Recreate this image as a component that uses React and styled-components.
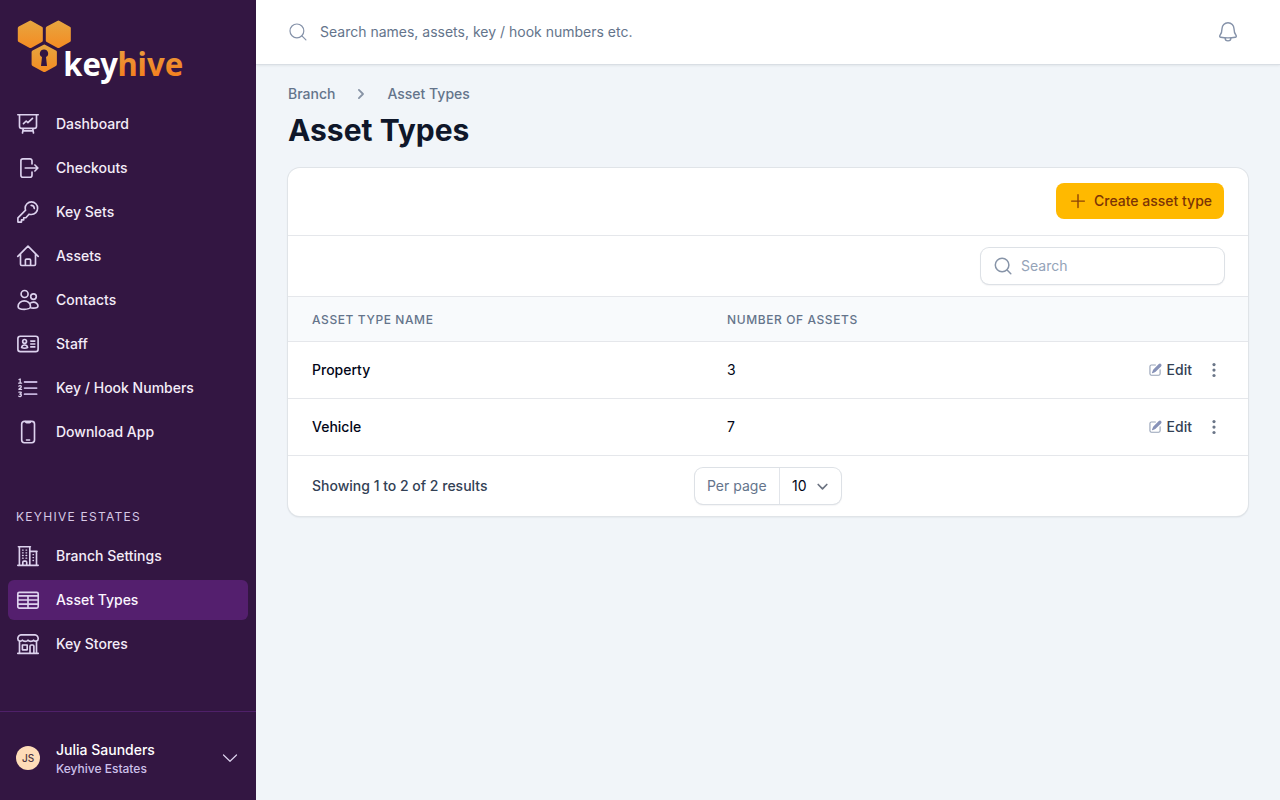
import React from "react";
import styled, { createGlobalStyle } from "styled-components";

const GlobalStyle = createGlobalStyle`
  *, *::before, *::after { box-sizing: border-box; }
  body {
    margin: 0;
    font-family: Inter, "Liberation Sans", sans-serif;
    font-size: 14px;
    line-height: 20px;
    color: #020617;
    background: #f1f5f9;
  }
  button, input { font: inherit; color: inherit; letter-spacing: inherit; }
`;

const Page = styled.div`
  display: flex;
  height: 100vh;
  overflow: hidden;
`;

const Sidebar = styled.aside`
  display: flex;
  flex-direction: column;
  flex: 0 0 256px;
  color: #f6effc;
  background: #331642;
`;

const Brand = styled.a`
  display: block;
  height: 104px;
  padding: 16px 0 0 16px;
`;

const NavList = styled.nav`
  display: flex;
  flex-direction: column;
  gap: 4px;
  padding: 0 8px;
`;

const NavItem = styled.a`
  display: flex;
  align-items: center;
  gap: 16px;
  height: 40px;
  padding: 0 8px;
  border-radius: 6px;
  font-weight: 500;
  color: ${(p) => (p.$active ? "#fbf5ff" : "#f3ecf8")};
  background: ${(p) => (p.$active ? "#541f6e" : "transparent")};
`;

const GroupLabel = styled.div`
  padding: 0 16px;
  margin: 57px 0 11px;
  height: 16px;
  font-size: 12px;
  line-height: 16px;
  letter-spacing: 1.27px;
  color: #d7c9e6;
  text-transform: uppercase;
`;

const LineIcon = styled.svg`
  flex: none;
  display: block;
  width: ${(p) => p.$size || 24}px;
  height: ${(p) => p.$size || 24}px;
  fill: none;
  stroke: currentColor;
  stroke-width: ${(p) => p.$stroke || 1.65};
  stroke-linecap: round;
  stroke-linejoin: round;
  color: ${(p) => p.$color || "#ddd2ee"};
`;

const SolidIcon = styled.svg`
  flex: none;
  display: block;
  width: ${(p) => p.$size}px;
  height: ${(p) => p.$size}px;
  fill: ${(p) => p.$color};
`;

const UserMenu = styled.button`
  display: flex;
  align-items: center;
  gap: 16px;
  height: 89px;
  margin-top: auto;
  padding: 4px 14px 0 16px;
  border: 0;
  border-top: 1px solid #4f2069;
  color: inherit;
  background: none;
  text-align: left;
`;

const Avatar = styled.span`
  display: grid;
  place-items: center;
  width: 24px;
  height: 24px;
  border-radius: 50%;
  font-size: 10px;
  font-weight: 500;
  color: #4a3540;
  background: #fedcb8;
`;

const UserText = styled.span`
  display: flex;
  flex: 1;
  flex-direction: column;
  padding-top: 1px;
`;

const UserName = styled.span`
  line-height: 20px;
  font-weight: 500;
  color: #fff;
`;

const UserOrg = styled.span`
  font-size: 12px;
  line-height: 17px;
  font-weight: 500;
  color: #cdc0ea;
`;

const Main = styled.main`
  display: flex;
  flex: 1;
  flex-direction: column;
  min-width: 0;
`;

const Topbar = styled.header`
  display: flex;
  align-items: center;
  gap: 12px;
  height: 64px;
  padding: 0 40px 0 32px;
  color: #64748b;
  background: #fff;
  box-shadow: 0 1px 0 #d9dee4, 0 1px 3px rgba(15, 23, 42, 0.12);
`;

const TopSearch = styled.span`
  flex: 1;
`;

const Content = styled.div`
  padding: 20px 32px;
`;

const Breadcrumbs = styled.nav`
  display: flex;
  align-items: center;
  gap: 16px;
  height: 20px;
  font-weight: 500;
  color: #64748b;
`;

const Title = styled.h1`
  margin: 8px 0 20px;
  height: 36px;
  font-size: 30px;
  line-height: 36px;
  font-weight: 700;
  color: #0f172a;
`;

const Card = styled.section`
  height: 348px;
  border-radius: 12px;
  background: #fff;
  box-shadow: 0 0 0 1px #e0e4e8, 0 1px 2px rgba(15, 23, 42, 0.16);
  overflow: hidden;
`;

const CardBar = styled.div`
  display: flex;
  align-items: center;
  justify-content: flex-end;
  height: ${(p) => p.$height}px;
  padding: 0 24px ${(p) => p.$lift || 0}px;
  border-bottom: 1px solid #e5e7eb;
`;

const PrimaryButton = styled.button`
  display: flex;
  align-items: center;
  gap: 6px;
  width: 168px;
  height: 36px;
  padding: 0 12px;
  border: 0;
  border-radius: 8px;
  font-weight: 500;
  white-space: nowrap;
  color: #7b3306;
  background: #ffb900;
`;

const SearchBox = styled.label`
  display: flex;
  align-items: center;
  gap: 8px;
  width: 243px;
  height: 36px;
  padding: 0 12px;
  border-radius: 8px;
  box-shadow: 0 0 0 1px #dde1e6, 0 1px 2px rgba(15, 23, 42, 0.14);
  color: #94a3b8;
`;

const Table = styled.div`
  display: grid;
`;

const Row = styled.div`
  display: grid;
  grid-template-columns: 415px 1fr auto;
  align-items: center;
  height: 57px;
  padding: 0 24px;
  border-bottom: 1px solid #e5e7eb;
`;

const HeadRow = styled(Row)`
  height: 45px;
  padding-top: 1px;
  font-size: 12px;
  font-weight: 500;
  letter-spacing: 0.6px;
  text-transform: uppercase;
  color: #64748b;
  background: #f8fafc;
`;

const NameCell = styled.span`
  font-weight: 500;
`;

const Actions = styled.div`
  display: flex;
  align-items: center;
  gap: 12px;
`;

const EditLink = styled.a`
  display: flex;
  align-items: center;
  gap: 4px;
  font-weight: 500;
  color: #334155;
`;

const Footer = styled.footer`
  display: grid;
  grid-template-columns: 1fr auto 1fr;
  align-items: center;
  height: 60px;
  padding: 0 24px;
  font-weight: 500;
  color: #334155;
`;

const PerPage = styled.div`
  display: flex;
  width: 146px;
  height: 36px;
  border-radius: 8px;
  box-shadow: 0 0 0 1px #dde1e6, 0 1px 2px rgba(15, 23, 42, 0.14);
  line-height: 36px;
`;

const PerPageLabel = styled.span`
  width: 85px;
  padding-left: 12px;
  font-weight: 400;
  color: #64748b;
  border-right: 1px solid #e2e5ea;
`;

const PerPageValue = styled.span`
  display: flex;
  flex: 1;
  align-items: center;
  justify-content: space-between;
  padding: 0 8px 0 12px;
  font-weight: 400;
  color: #020617;
`;

const icons = {
  dashboard: (
    <path d="M1.8 2.7h20.4M3.5 2.7v11.5c0 1.2.9 2.1 2.1 2.1h12.8c1.2 0 2.1-.9 2.1-2.1V2.7M7.3 16.5 6.5 21M16.7 16.5l.8 4.5M6.9 18.8h10.2M7.5 11.6 10.2 9l1.7 1.7 4.6-4.4" />
  ),
  checkouts: (
    <path d="M16 8V4.8c0-1.1-.9-2-2-2H6.9c-1.1 0-2 .9-2 2v14.4c0 1.1.9 2 2 2H14c1.1 0 2-.9 2-2V16M9.2 12h12.6M18.9 9l3 3-3 3" />
  ),
  keys: (
    <path d="M21.6 8.2a6.2 6.2 0 0 0-6.2-6.3c-3.5 0-6.2 2.8-6.2 6.2 0 .8.1 1.4.4 2.1L1.9 17.8v4.3h3.6v-2.2h2.2v-2.2h2.2l3.1-3.5c.8.2 1.6.3 2.4.3a6.2 6.2 0 0 0 6.2-6.3ZM15.2 5.4c1.6 0 3 1.3 3.1 3.1" />
  ),
  assets: (
    <path d="M1.8 12.4 12 2.2l10.2 10.2M4.5 9.9v10.4c0 .7.5 1.2 1.2 1.2h12.6c.7 0 1.2-.5 1.2-1.2V9.9M9.4 21.3v-5c0-.7.5-1.2 1.2-1.2h2.8c.7 0 1.2.5 1.2 1.2v5" />
  ),
  contacts: (
    <>
      <circle cx="8.6" cy="6" r="3.5" />
      <circle cx="17.5" cy="8.6" r="2.8" />
      <path d="M8.3 12.8c-3.2 0-6.2 2.5-6.2 5.6 0 2 3 2.9 6.2 2.9s6.2-.9 6.2-2.9c0-3.1-3-5.6-6.2-5.6ZM13.8 15.5c1-.9 2.2-1.4 3.6-1.4 2.5 0 4.6 1.9 4.6 3.8 0 1.5-2.4 2.2-4.7 2.2-1.2 0-2.4-.2-3.3-.6" />
    </>
  ),
  staff: (
    <>
      <rect x="1.9" y="4.2" width="20.2" height="15.4" rx="2.4" />
      <circle cx="8.6" cy="9.4" r="1.9" />
      <path d="M5.6 15.6c.3-1.7 1.4-2.6 3-2.6s2.7.9 3 2.6c-1.8.8-4.2.8-6 0ZM14.8 9.1h4M14.8 12h4M14.8 14.9h4" />
    </>
  ),
  numbers: (
    <>
      <path stroke="#c3b2da" strokeWidth="1.8" d="M8.6 6h12M8.6 12.1h12M8.6 18.2h12" />
      <path strokeWidth="1.3" d="m3 3.5 1.2-.5v4.1M2.7 7.2h2.9M2.9 10.2c.6-.8 2.4-.7 2.4.5 0 .9-1.3 1.5-2.4 2.6h2.7M2.9 16.2h2.3c.3.8-.6 1.8-1.4 1.9 1.1 0 1.8.7 1.5 1.5-.3 1-1.7 1.2-2.5.6" />
    </>
  ),
  phone: (
    <>
      <rect x="5.7" y="1.3" width="12.8" height="21.4" rx="2.6" />
      <path d="M9.7 1.5c0 .8.4 1.2 1 1.2h2.8c.6 0 1-.4 1-1.2M10.5 20h3.1" />
    </>
  ),
  branch: (
    <>
      <path d="M1.8 21.3h20.4M3.4 21.3V3M2.4 2.7h12M13.8 2.7v18.6M14 7.4h7M20.5 7.4v13.9M6.8 21.3v-3c0-.8.6-1.2 1.2-1.2h1.5c.7 0 1.2.5 1.2 1.2v3" />
      <path strokeWidth="1.3" d="M6.5 6.1h.7M10 6.1h.7M6.5 8.8h.7M10 8.8h.7M6.5 11.5h.7M10 11.5h.7M6.5 14.2h.7M10 14.2h.7M17 10.7h.5M17 13.6h.5M17 16.5h.5" />
    </>
  ),
  table: (
    <>
      <rect x="1.8" y="4.3" width="20.4" height="15.8" rx="1.5" />
      <path d="M2 7.9h20M2 12h20M2 16.1h20M12 8v12" />
    </>
  ),
  stores: (
    <>
      <path d="M1.8 21.4h20.4M3.5 21.4V9.8M20.5 21.4V9.8M4.9 2.8h14.2c1.6 0 3.1 2.1 3.1 3.9 0 2.7-3.6 3.2-4.6 1.4-.9 1.6-4.6 1.6-5.6 0-1.1 1.6-4.6 1.6-5.6 0-1.1 1.8-4.6 1.3-4.6-1.4 0-1.8 1.5-3.9 3.1-3.9Z" />
      <path d="M6.4 13h4.8v4.8H6.4zM14 21.2V14.2c0-.7.5-1.2 1.2-1.2h1.5c.7 0 1.2.5 1.2 1.2v7" />
    </>
  ),
};

const mainNav = [
  ["Dashboard", "dashboard"],
  ["Checkouts", "checkouts"],
  ["Key Sets", "keys"],
  ["Assets", "assets"],
  ["Contacts", "contacts"],
  ["Staff", "staff"],
  ["Key / Hook Numbers", "numbers"],
  ["Download App", "phone"],
];

const branchNav = [
  ["Branch Settings", "branch"],
  ["Asset Types", "table"],
  ["Key Stores", "stores"],
];

const assetTypes = [
  { name: "Property", count: 3 },
  { name: "Vehicle", count: 7 },
];

function Logo() {
  const hexagon = "M12 0.8 Q13.2 0 14.4 0.8 L25 6.5 Q26 7 26 7.8 V20.2 Q26 21.3 25 21.8 L14.4 27.6 Q13.2 28.2 12 27.6 L1.2 21.8 Q0.2 21.2 0.2 20.2 V7.8 Q0.2 6.8 1.2 6.3 Z";
  return (
    <svg width="170" height="72" viewBox="0 0 170 72" aria-label="keyhive">
      <defs>
        <linearGradient id="honey" x1="0" y1="0" x2="0" y2="1">
          <stop offset="0" stopColor="#e6a640" />
          <stop offset="1" stopColor="#f58b22" />
        </linearGradient>
        <linearGradient id="amber" gradientUnits="userSpaceOnUse" x1="0" y1="35" x2="0" y2="61">
          <stop offset="0" stopColor="#e99a3a" />
          <stop offset="1" stopColor="#f4801f" />
        </linearGradient>
      </defs>
      <path fill="url(#honey)" transform="translate(1.6 4.2) scale(.97 1)" d={hexagon} />
      <path fill="url(#honey)" transform="translate(29.6 4.2) scale(.97 1)" d={hexagon} />
      <path fill="url(#honey)" transform="translate(15.4 28.1) scale(.98 1)" d={hexagon} />
      <path fill="#331642" d="M28 33.4a4.1 4.1 0 0 0-2 7.7l-1 8.8h6l-1-8.8a4.1 4.1 0 0 0-2-7.7Z" />
      <g fontFamily='"Noto Sans", sans-serif' fontWeight="700" fontSize="31.5">
        <text x="47.2" y="60" textLength="54.8" lengthAdjust="spacingAndGlyphs" fill="#fff">key</text>
        <text x="101.4" y="60" textLength="65.8" lengthAdjust="spacingAndGlyphs" fill="url(#amber)">hive</text>
      </g>
    </svg>
  );
}

function Nav({ items, active }) {
  return (
    <NavList>
      {items.map(([label, icon]) => (
        <NavItem key={label} $active={label === active}>
          <LineIcon viewBox="0 0 24 24">{icons[icon]}</LineIcon>
          {label}
        </NavItem>
      ))}
    </NavList>
  );
}

export default function App() {
  return (
    <Page>
      <GlobalStyle />
      <Sidebar>
        <Brand><Logo /></Brand>
        <Nav items={mainNav} />
        <GroupLabel>Keyhive Estates</GroupLabel>
        <Nav items={branchNav} active="Asset Types" />
        <UserMenu>
          <Avatar>JS</Avatar>
          <UserText>
            <UserName>Julia Saunders</UserName>
            <UserOrg>Keyhive Estates</UserOrg>
          </UserText>
          <LineIcon viewBox="0 0 24 24" $stroke={1.2}><path d="m5.5 9 6.5 6.3L18.5 9" /></LineIcon>
        </UserMenu>
      </Sidebar>
      <Main>
        <Topbar>
          <LineIcon viewBox="0 0 20 20" $size={20} $stroke={1.2} $color="#8592a9">
            <circle cx="8.9" cy="8.9" r="6.9" /><path d="m13.9 13.9 4 4" />
          </LineIcon>
          <TopSearch>Search names, assets, key / hook numbers etc.</TopSearch>
          <LineIcon viewBox="0 0 24 24" $stroke={1.4} $color="#8592a9">
            <path d="M12 2.8c-3.4 0-6 2.7-6 6 0 3.1-.6 4.9-2.1 6.7-.6.8 0 1.6.8 1.7 4.7.9 9.9.9 14.6 0 .8-.1 1.4-.9.8-1.7-1.5-1.8-2.1-3.6-2.1-6.7 0-3.3-2.6-6-6-6ZM9.1 18c0 1.8 1.3 2.9 2.9 2.9s2.9-1.1 2.9-2.9" />
          </LineIcon>
        </Topbar>
        <Content>
          <Breadcrumbs>
            <span>Branch</span>
            <LineIcon viewBox="0 0 20 20" $size={20} $stroke={1.8} $color="#8793a5">
              <path d="m7.9 5.9 4.1 4.1-4.1 4.1" />
            </LineIcon>
            <span>Asset Types</span>
          </Breadcrumbs>
          <Title>Asset Types</Title>
          <Card>
            <CardBar $height={68} $lift={1}>
              <PrimaryButton>
                <LineIcon viewBox="0 0 20 20" $size={20} $stroke={1.4} $color="#8c4306"><path d="M10 3.7v12.8M3.6 10.1h12.8" /></LineIcon>
                Create asset type
              </PrimaryButton>
            </CardBar>
            <CardBar $height={61}>
              <SearchBox>
                <LineIcon viewBox="0 0 20 20" $size={20} $stroke={1.5} $color="#8794a8">
                  <circle cx="9.1" cy="9" r="6.8" /><path d="m14.1 14 3.7 3.7" />
                </LineIcon>
                Search
              </SearchBox>
            </CardBar>
            <Table>
              <HeadRow><span>Asset type name</span><span>Number of assets</span></HeadRow>
              {assetTypes.map((type) => (
                <Row key={type.name}>
                  <NameCell>{type.name}</NameCell>
                  <span>{type.count}</span>
                  <Actions>
                    <EditLink>
                      <SolidIcon viewBox="0.5 0.5 20 20" $size={16} $color="#97a3b8">
                        <g transform="translate(1.6 .8) scale(.94)">
                          <path fill="#8792b8" d="m5.433 13.917 1.262-3.155A4 4 0 0 1 7.58 9.42l6.92-6.918a2.121 2.121 0 0 1 3 3l-6.92 6.918c-.383.383-.84.685-1.343.886l-3.154 1.262a.5.5 0 0 1-.65-.65Z" />
                          <path d="M3.5 5.75c0-.69.56-1.25 1.25-1.25H10A.75.75 0 0 0 10 3H4.75A2.75 2.75 0 0 0 2 5.75v9.5A2.75 2.75 0 0 0 4.75 18h9.5A2.75 2.75 0 0 0 17 15.25V10a.75.75 0 0 0-1.5 0v5.25c0 .69-.56 1.25-1.25 1.25h-9.5c-.69 0-1.25-.56-1.25-1.25v-9.5Z" />
                        </g>
                      </SolidIcon>
                      Edit
                    </EditLink>
                    <SolidIcon viewBox="0 0 20 20" $size={20} $color="#6b7688">
                      <circle cx="10" cy="4.6" r="1.6" /><circle cx="10" cy="10.1" r="1.6" /><circle cx="10" cy="15.5" r="1.6" />
                    </SolidIcon>
                  </Actions>
                </Row>
              ))}
            </Table>
            <Footer>
              <span>Showing 1 to 2 of 2 results</span>
              <PerPage>
                <PerPageLabel>Per page</PerPageLabel>
                <PerPageValue>
                  10
                  <LineIcon viewBox="0 0 20 20" $size={21} $stroke={1.6} $color="#6b7280"><path d="m5.9 8.1 4.1 4.1 4.1-4.1" /></LineIcon>
                </PerPageValue>
              </PerPage>
            </Footer>
          </Card>
        </Content>
      </Main>
    </Page>
  );
}
